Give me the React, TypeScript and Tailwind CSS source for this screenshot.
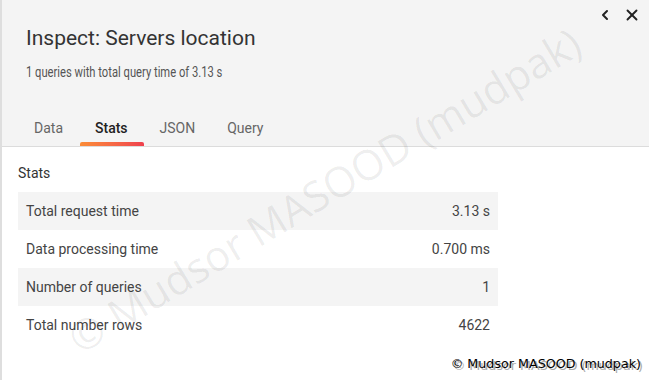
import React from 'react';
import { ChevronLeft, X } from 'lucide-react';

const stats = [
  { label: 'Total request time', value: '3.13 s' },
  { label: 'Data processing time', value: '0.700 ms' },
  { label: 'Number of queries', value: '1' },
  { label: 'Total number rows', value: '4622' },
];

const tabs = ['Data', 'Stats', 'JSON', 'Query'];

export default function App() {
  return (
    <div className="relative w-[649px] h-[380px] overflow-hidden bg-white border-l-2 border-[#dedede] font-['Roboto',sans-serif]">
      <div className="relative bg-[#f4f4f4] border-b border-[#dcdcdc] h-[147px] flex flex-col">
        <div className="absolute right-[8px] top-[6px] flex items-center gap-[10px] text-[#222]">
          <ChevronLeft className="w-[16px] h-[16px]" strokeWidth={3} />
          <X className="w-[18px] h-[18px]" strokeWidth={2.5} />
        </div>
        <div className="pl-[24px] pt-[24px]">
          <h1 className="text-[21px] leading-[28px] text-[#333] font-normal">Inspect: Servers location</h1>
          <p className="mt-[11px] text-[14px] leading-[18px] text-[#555] origin-left scale-x-[0.8] whitespace-nowrap">1 queries with total query time of 3.13 s</p>
        </div>
        <div className="mt-auto pl-[16px] flex">
          {tabs.map((t) => (
            <div key={t} className="relative px-[16px] pb-[9px] text-[14px] leading-[18px]">
              <span className={t === 'Stats' ? 'text-[#222] font-medium' : 'text-[#666]'}>{t}</span>
              {t === 'Stats' && (
                <div className="absolute left-[1px] right-0 bottom-0 h-[4px] rounded-t-[2px] bg-gradient-to-r from-[#fb8c36] to-[#ef3f4d]" />
              )}
            </div>
          ))}
        </div>
      </div>
      <div className="pl-[16px] pt-[18px] w-[496px]">
        <div className="text-[14px] leading-[16px] text-[#333] mb-[11px]">Stats</div>
        <div className="flex flex-col">
          {stats.map((s, i) => (
            <div
              key={s.label}
              className={`h-[38px] flex items-center justify-between px-[8px] text-[14px] text-[#444] ${i % 2 === 0 ? 'bg-[#f4f4f4]' : 'bg-white'}`}
            >
              <span>{s.label}</span>
              <span>{s.value}</span>
            </div>
          ))}
        </div>
      </div>
      <div className="pointer-events-none absolute left-[2px] top-[164px] w-[640px] text-center -rotate-[31deg] text-[42px] leading-[52px] text-black/[0.07] font-['Open_Sans',sans-serif] whitespace-nowrap">
        © Mudsor MASOOD (mudpak)
      </div>
      <div className="absolute right-[8px] bottom-[9px] text-[12.7px] leading-[14px] text-black font-['DejaVu_Sans',sans-serif] [text-shadow:2px_2px_0_#aaa]">
        © Mudsor MASOOD (mudpak)
      </div>
    </div>
  );
}
